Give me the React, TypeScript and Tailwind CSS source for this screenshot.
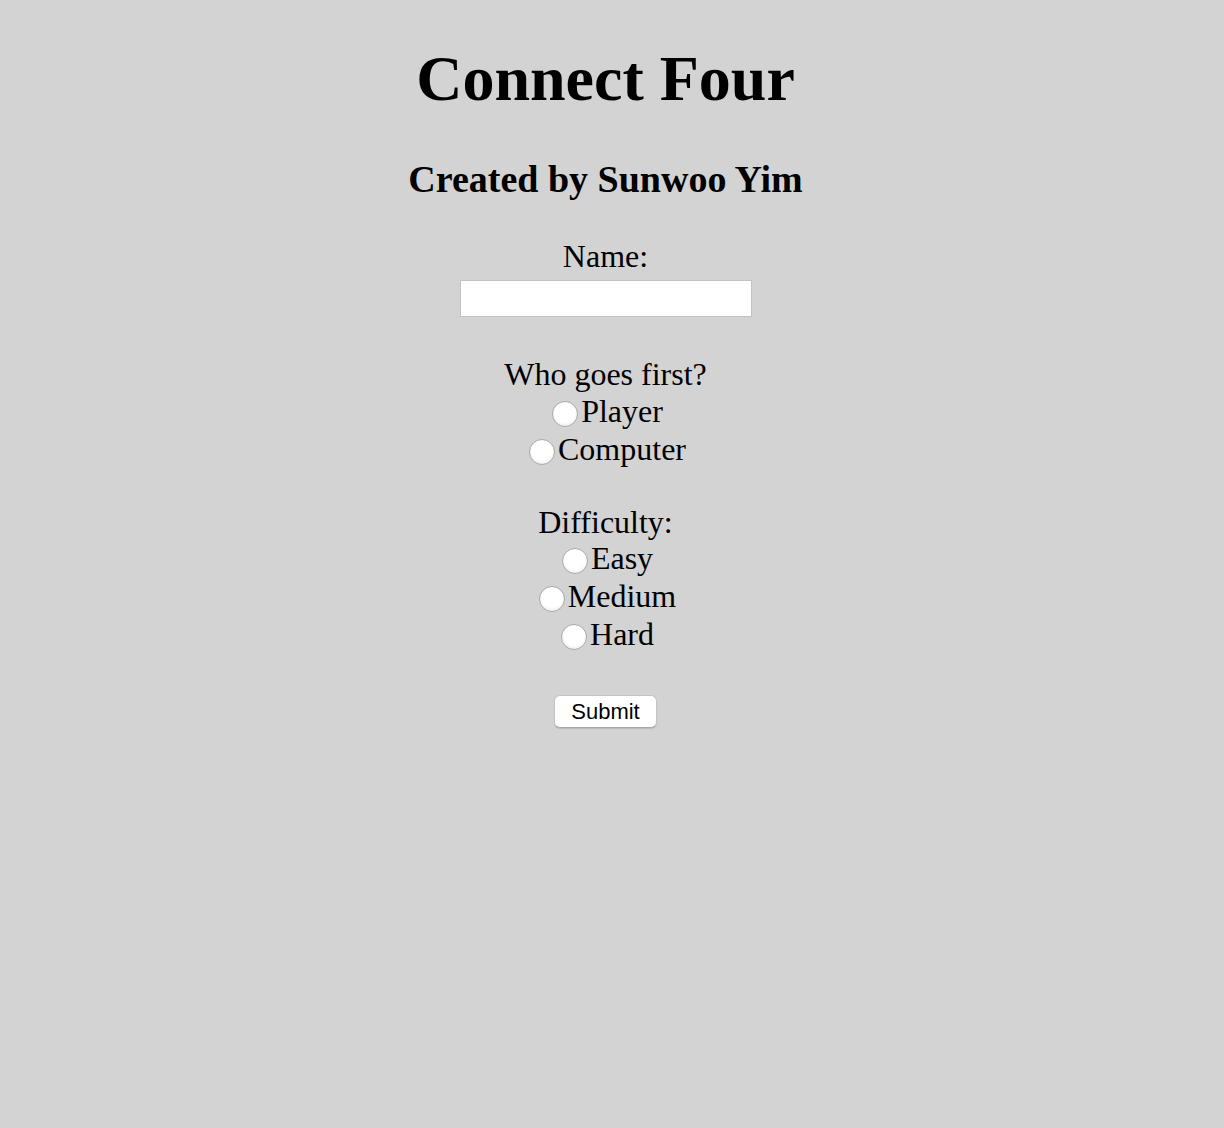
import { useState } from "react";

function Radio({
  name,
  value,
  label,
  checked,
  onPick,
}: {
  name: string;
  value: string;
  label: string;
  checked: boolean;
  onPick: (v: string) => void;
}) {
  return (
    <label className="flex items-center leading-[38px] h-[38px]">
      <input
        type="radio"
        name={name}
        value={value}
        checked={checked}
        onChange={() => onPick(value)}
        className="appearance-none shrink-0 w-[26px] h-[26px] rounded-full bg-white border border-[#a8a8a8] shadow-[inset_0_-2px_3px_rgba(0,0,0,0.06)] ml-[4px] mr-[3px] mt-[6px] checked:bg-[radial-gradient(circle,#333_30%,#fff_34%)]"
      />
      <span>{label}</span>
    </label>
  );
}

export default function App() {
  const [first, setFirst] = useState("");
  const [level, setLevel] = useState("");

  return (
    <div
      className="min-h-[1128px] bg-[#d3d3d3] text-black pt-[43px] pr-[13px] flex flex-col items-center"
      style={{ fontFamily: '"Liberation Serif", "Times New Roman", serif' }}
    >
      <h1 className="text-[64px] leading-[71px] font-bold">Connect Four</h1>
      <h3 className="text-[38px] leading-[41px] font-bold mt-[45px]">
        Created by Sunwoo Yim
      </h3>

      <form
        className="flex flex-col items-center text-[32px] mt-[38px]"
        onSubmit={(e) => e.preventDefault()}
      >
        <div className="leading-[36px]">Name:</div>
        <input
          type="text"
          className="mt-[6px] w-[292px] h-[37px] bg-white border border-[#c2c2c2] outline-none px-1 text-[20px]"
        />

        <div className="leading-[35px] mt-[40px]">Who goes first?</div>
        <Radio name="first" value="player" label="Player" checked={first === "player"} onPick={setFirst} />
        <Radio name="first" value="computer" label="Computer" checked={first === "computer"} onPick={setFirst} />

        <div className="leading-[34px] mt-[37px]">Difficulty:</div>
        <Radio name="level" value="easy" label="Easy" checked={level === "easy"} onPick={setLevel} />
        <Radio name="level" value="medium" label="Medium" checked={level === "medium"} onPick={setLevel} />
        <Radio name="level" value="hard" label="Hard" checked={level === "hard"} onPick={setLevel} />

        <button
          type="submit"
          className="mt-[42px] w-[103px] h-[33px] bg-white rounded-[6px] border border-[#c4c4c4] border-b-[#a8a8a8] shadow-[0_1px_1px_rgba(0,0,0,0.12)] text-[22px] leading-[31px]"
          style={{ fontFamily: '"Liberation Sans", Arial, sans-serif' }}
        >
          Submit
        </button>
      </form>
    </div>
  );
}
